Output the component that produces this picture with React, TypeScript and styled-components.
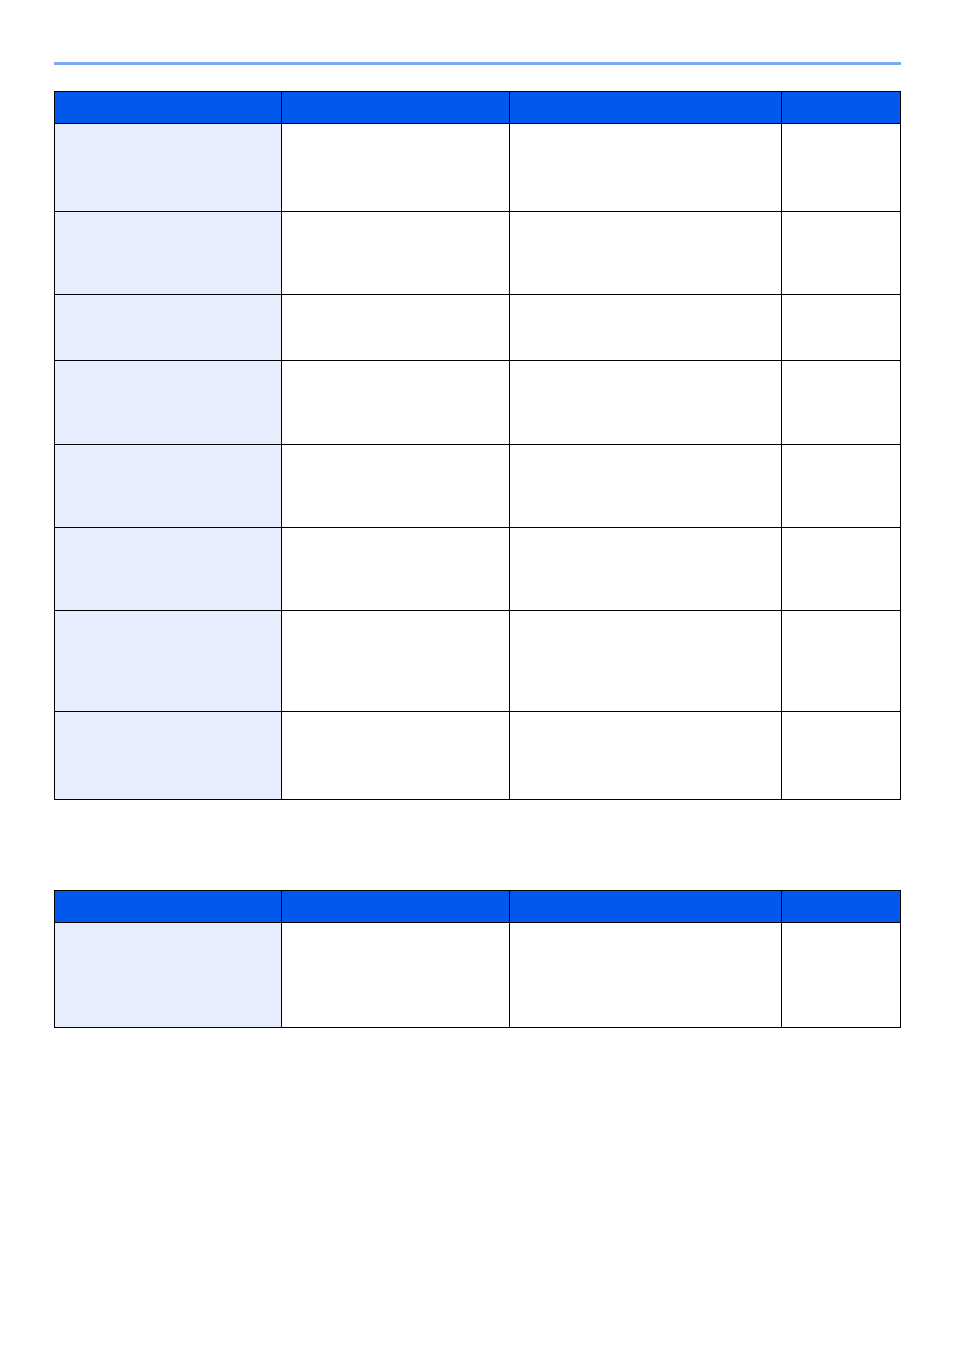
import React from 'react';
import styled, { createGlobalStyle } from 'styled-components';

const GlobalStyle = createGlobalStyle`
  body {
    margin: 0;
    background: #ffffff;
    font-family: "Liberation Sans", Arial, sans-serif;
  }
`;

const Page = styled.div`
  width: 954px;
  height: 1350px;
  padding: 62px 0 0 54px;
  box-sizing: border-box;
`;

const Rule = styled.div`
  width: 847px;
  height: 3px;
  background: #7aa9f6;
`;

const Table = styled.div<{ $gap: number }>`
  margin-top: ${(p) => p.$gap}px;
  width: 847px;
  border-left: 1px solid #000;
  border-top: 1px solid #000;
  box-sizing: border-box;
`;

const Row = styled.div<{ $h: number }>`
  display: grid;
  grid-template-columns: 227px 228px 272px 119px;
  height: ${(p) => p.$h}px;
`;

const Cell = styled.div<{ $kind: 'head' | 'label' | 'plain' }>`
  box-sizing: border-box;
  border-right: 1px solid #000;
  border-bottom: 1px solid #000;
  background: ${(p) =>
    p.$kind === 'head' ? '#0058ec' : p.$kind === 'label' ? '#e6edfc' : '#ffffff'};
`;

const HeaderRow = () => (
  <Row $h={32}>
    <Cell $kind="head" />
    <Cell $kind="head" />
    <Cell $kind="head" />
    <Cell $kind="head" />
  </Row>
);

const BodyRow = ({ h }: { h: number }) => (
  <Row $h={h}>
    <Cell $kind="label" />
    <Cell $kind="plain" />
    <Cell $kind="plain" />
    <Cell $kind="plain" />
  </Row>
);

const firstRows = [88, 83, 66, 84, 83, 83, 101, 88];
const secondRows = [105];

const App = () => (
  <>
    <GlobalStyle />
    <Page>
      <Rule />
      <Table $gap={26}>
        <HeaderRow />
        {firstRows.map((h, i) => (
          <BodyRow key={i} h={h} />
        ))}
      </Table>
      <Table $gap={90}>
        <HeaderRow />
        {secondRows.map((h, i) => (
          <BodyRow key={i} h={h} />
        ))}
      </Table>
    </Page>
  </>
);

export default App;
